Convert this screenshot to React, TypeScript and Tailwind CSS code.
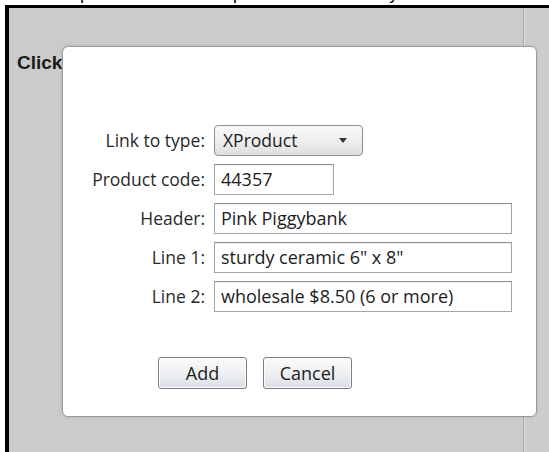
import React from "react";

const font = { fontFamily: '"Open Sans", "Noto Sans", sans-serif' };

function Field({ label, children }: { label: string; children: React.ReactNode }) {
  return (
    <>
      <div className="flex h-[31px] items-center justify-end text-[17.5px] text-[#2a2a2a]">{label}</div>
      <div className="flex h-[31px] items-center">{children}</div>
    </>
  );
}

function TextBox({ value, width }: { value: string; width: string }) {
  return (
    <div
      className={`flex h-[31px] items-center border border-[#a3a5a8] border-t-[#8d8f92] bg-white pl-[6px] text-[18px] text-[#1c1c1c] shadow-[inset_0_1px_1px_rgba(0,0,0,0.06)] ${width}`}
    >
      {value}
    </div>
  );
}

export default function App() {
  return (
    <div className="relative h-[452px] w-[549px] overflow-hidden bg-white" style={font}>
      {/* caption line above the frame, mostly clipped */}
      <div className="h-[5px] overflow-hidden">
        <div
          className="-mt-[17px] whitespace-nowrap pl-[0px] text-[18px] leading-[20px] text-black"
          style={{ fontFamily: '"Liberation Sans", Arial, sans-serif' }}
        >
          The example shows the new panel that is seen by
        </div>
      </div>

      {/* page frame */}
      <div className="ml-[5px] flex h-[447px] border-l-[4px] border-t-[3px] border-black bg-[#cbcbcb]">
        <div className="flex-1 pl-[8px] pt-[44px]">
          <div
            className="text-[19px] font-bold leading-[22px] text-[#1a1a1a]"
            style={{ fontFamily: '"Liberation Sans", Arial, sans-serif' }}
          >
            Click
          </div>
        </div>
        <div className="w-[26px] border-l border-[#a8a8a8] bg-[#cdcdcd] shadow-[inset_1px_0_0_#dedede]" />
      </div>

      {/* modal dialog */}
      <div className="absolute left-[62px] top-[46px] h-[371px] w-[475px] rounded-[6px] border border-[#9b9b9b] bg-white shadow-[0_0_3px_rgba(0,0,0,0.15)]">
        <div className="grid grid-cols-[142px_auto] gap-x-[9px] gap-y-[8px] pt-[78px]">
          <Field label="Link to type:">
            <div className="flex h-[31px] w-[149px] items-center justify-between rounded-[4px] border border-[#8f9193] bg-gradient-to-b from-[#f8f8f8] via-[#efefef] to-[#dedede] pl-[8px] pr-[15px] text-[17.5px] text-[#1c1c1c]">
              <span>XProduct</span>
              <svg width="8" height="5" viewBox="0 0 8 5">
                <path d="M0 0 H8 L4 5 Z" fill="#333" />
              </svg>
            </div>
          </Field>
          <Field label="Product code:">
            <TextBox value="44357" width="w-[120px]" />
          </Field>
          <Field label="Header:">
            <TextBox value="Pink Piggybank" width="w-[298px]" />
          </Field>
          <Field label="Line 1:">
            <TextBox value={'sturdy ceramic 6" x 8"'} width="w-[298px]" />
          </Field>
          <Field label="Line 2:">
            <TextBox value="wholesale $8.50 (6 or more)" width="w-[298px]" />
          </Field>
        </div>

        <div className="mt-[45px] flex gap-[16px] pl-[95px]">
          <button className="h-[32px] w-[89px] rounded-[3px] border border-[#7a7c80] bg-gradient-to-b from-[#fbfbfb] via-[#eef0f2] to-[#dadee5] text-[18px] text-[#1c1c1c] shadow-[inset_0_0_0_1px_#fcfcfc]">
            Add
          </button>
          <button className="h-[32px] w-[89px] rounded-[3px] border border-[#7a7c80] bg-gradient-to-b from-[#fbfbfb] via-[#eef0f2] to-[#dadee5] text-[18px] text-[#1c1c1c] shadow-[inset_0_0_0_1px_#fcfcfc]">
            Cancel
          </button>
        </div>
      </div>
    </div>
  );
}
